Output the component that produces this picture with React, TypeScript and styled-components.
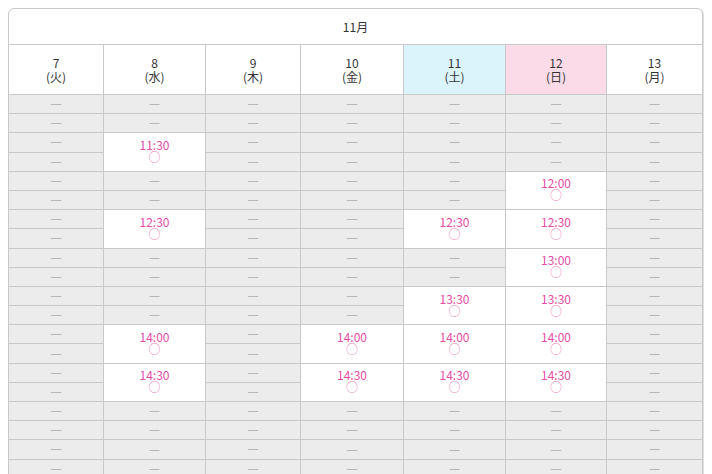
import React from "react";
import styled, { createGlobalStyle } from "styled-components";

const ROW_COUNT = 24;
const START_MIN = 11 * 60;

interface Day {
  date: number;
  weekday: string;
  kind?: "sat" | "sun";
  width: number;
  open: string[];
}

const days: Day[] = [
  { date: 7, weekday: "火", width: 94, open: [] },
  { date: 8, weekday: "水", width: 102, open: ["11:30", "12:30", "14:00", "14:30"] },
  { date: 9, weekday: "木", width: 95, open: [] },
  { date: 10, weekday: "金", width: 103, open: ["14:00", "14:30"] },
  { date: 11, weekday: "土", kind: "sat", width: 102, open: ["12:30", "13:30", "14:00", "14:30"] },
  {
    date: 12,
    weekday: "日",
    kind: "sun",
    width: 101,
    open: ["12:00", "12:30", "13:00", "13:30", "14:00", "14:30"]
  },
  { date: 13, weekday: "月", width: 96, open: [] }
];

const toLabel = (row: number) => {
  const m = START_MIN + row * 15;
  return `${Math.floor(m / 60)}:${String(m % 60).padStart(2, "0")}`;
};

const GlobalStyle = createGlobalStyle`
  body {
    margin: 8px;
    background: #fff;
    font-family: "Noto Sans CJK JP", "Noto Sans", sans-serif;
    color: #333;
  }
`;

const DayColumn = ({ day }: { day: Day }) => {
  const cells: React.ReactNode[] = [];
  for (let r = 0; r < ROW_COUNT; r++) {
    const label = toLabel(r);
    if (day.open.includes(label)) {
      cells.push(
        <OpenCell key={r}>
          <Time>{label}</Time>
          <Mark>○</Mark>
        </OpenCell>
      );
      r++;
    } else {
      cells.push(
        <ClosedCell key={r}>
          <Dash>—</Dash>
        </ClosedCell>
      );
    }
  }

  return (
    <Column>
      <DayHeader kind={day.kind}>
        <span>{day.date}</span>
        <span>({day.weekday})</span>
      </DayHeader>
      {cells}
    </Column>
  );
};

export default function App() {
  return (
    <>
      <GlobalStyle />
      <Calendar>
        <MonthHeader>11月</MonthHeader>
        <Days style={{ gridTemplateColumns: days.map((d) => `${d.width}px`).join(" ") }}>
          {days.map((d) => (
            <DayColumn key={d.date} day={d} />
          ))}
        </Days>
      </Calendar>
    </>
  );
}

const Calendar = styled.div`
  width: 695px;
  box-sizing: border-box;
  border: 1px solid #c9c9c9;
  border-radius: 6px;
  overflow: hidden;
  background: #fff;
  box-shadow: 1px 1px 2px rgba(0, 0, 0, 0.18);
`;

const MonthHeader = styled.div`
  height: 36px;
  box-sizing: border-box;
  border-bottom: 1px solid #c9c9c9;
  display: flex;
  align-items: center;
  justify-content: center;
  font-size: 12px;
`;

const Days = styled.div`
  display: grid;
`;

const Column = styled.div`
  display: flex;
  flex-direction: column;
  & + & {
    border-left: 1px solid #c9c9c9;
  }
`;

const DayHeader = styled.div<{ kind?: "sat" | "sun" }>`
  height: 50px;
  box-sizing: border-box;
  border-bottom: 1px solid #c9c9c9;
  display: flex;
  flex-direction: column;
  align-items: center;
  justify-content: center;
  font-size: 12px;
  line-height: 14px;
  background: ${({ kind }) =>
    kind === "sat" ? "#dbf4fc" : kind === "sun" ? "#fcdbe9" : "#fff"};
`;

const ClosedCell = styled.div`
  height: 19.2px;
  box-sizing: border-box;
  border-bottom: 1px solid #c9c9c9;
  background: #ececec;
  display: flex;
  align-items: center;
  justify-content: center;
`;

const Dash = styled.span`
  font-family: "Liberation Sans", sans-serif;
  font-size: 10px;
  line-height: 10px;
  color: #aaa;
`;

const OpenCell = styled.div`
  height: 38.4px;
  box-sizing: border-box;
  padding-bottom: 2px;
  border-bottom: 1px solid #c9c9c9;
  background: #fff;
  display: flex;
  flex-direction: column;
  align-items: center;
  justify-content: center;
  color: #e64ca4;
`;

const Time = styled.span`
  font-size: 12px;
  line-height: 12px;
`;

const Mark = styled.span`
  font-size: 12px;
  line-height: 12px;
  color: #ec7fbb;
`;
